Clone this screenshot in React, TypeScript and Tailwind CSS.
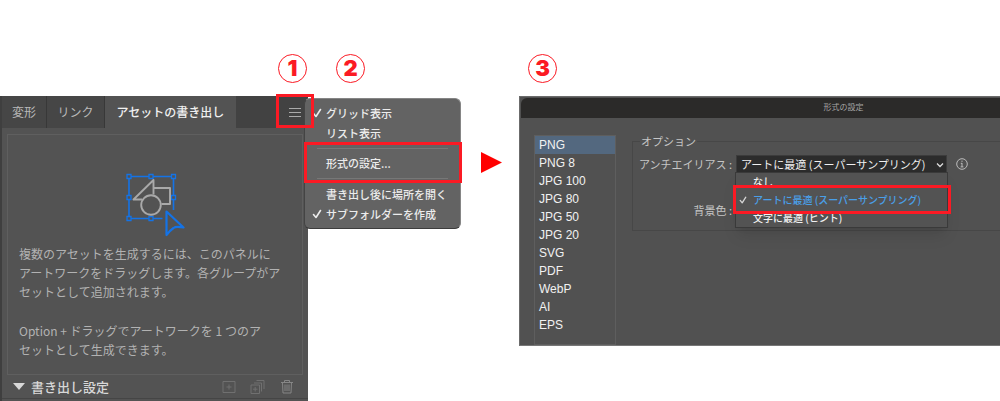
import React, { useState } from 'react';
import { clsx } from 'clsx';

const FORMATS = ['PNG', 'PNG 8', 'JPG 100', 'JPG 80', 'JPG 50', 'JPG 20', 'SVG', 'PDF', 'WebP', 'AI', 'EPS'];

const ANTIALIAS = ['なし', 'アートに最適 (スーパーサンプリング)', '文字に最適 (ヒント)'];

const Step = ({ n, className }: { n: number; className?: string }) => (
  <span
    className={clsx(
      "flex h-[29px] w-[29px] shrink-0 items-center justify-center rounded-full border border-[#fb1a24] font-['Inter','Lato',sans-serif] text-[22px] leading-6 font-black text-[#fb1a24]",
      className
    )}
  >
    {n}
  </span>
);

const Highlight = ({ className }: { className: string }) => (
  <span className={clsx('pointer-events-none absolute z-20 border-[#fb1a24]', className)} />
);

const CheckMark = ({ className = 'h-[10px] w-[10px]' }: { className?: string }) => (
  <svg viewBox="0 0 10 10" className={className} fill="none" stroke="currentColor" strokeWidth="1.6" strokeLinecap="round" strokeLinejoin="round">
    <path d="M1.5 5.5 L4 8.5 L8.5 1.5" />
  </svg>
);

const ArtworkIcon = () => (
  <svg width="60" height="66" viewBox="0 0 60 66" fill="none" className="shrink-0">
    <g stroke="#1473e6" strokeWidth="1.6">
      <path d="M6 4.5 H24 M28 4.5 H46 M48.5 7 V23 M48.5 28 V38 M4 7 V23 M4 28 V44 M6 46.5 H24 M28 46.5 H37.5" />
      <path strokeWidth="1.3" d="M2 2.5h4v4h-4z M24 2.5h4v4h-4z M46.5 2.5h4v4h-4z M2 23.5h4v4h-4z M46.5 23.5h4v4h-4z M2 44.5h4v4h-4z M24 44.5h4v4h-4z" />
      <path strokeWidth="2.2" strokeLinejoin="round" d="M41.5 39.5 L58.5 55.5 Q51 54 48.5 56 Q45.5 58 41.5 63 Z" />
    </g>
    <g stroke="#a9a9a9" strokeWidth="1.9" strokeLinejoin="round">
      <path d="M28.5 22.5 V8 L8.5 27.5 H17" />
      <path d="M29 16 H45 V32 H36.5" />
      <circle cx="26" cy="33" r="9.8" />
    </g>
  </svg>
);

const NewIcon = () => (
  <svg width="14" height="14" viewBox="0 0 14 14" fill="none" stroke="currentColor">
    <path d="M1 1.5h12v11H1z M7 4.5v5 M4.5 7h5" />
  </svg>
);

const StackIcon = () => (
  <svg width="16" height="16" viewBox="0 0 16 16" fill="none" stroke="currentColor">
    <path d="M1 6h8.5v8.5H1z M5.2 8v4.5 M3 10.2h4.5 M4 4h7.5v8.5 M6.5 1.5h7.5v8.5" />
  </svg>
);

const TrashIcon = () => (
  <svg width="14" height="16" viewBox="0 0 14 16" fill="none" stroke="currentColor">
    <path d="M1 3.5h12 M4.5 3.5v-2h5v2 M2.5 3.5l.5 10.5h8l.5-10.5 M5 5.5v6.5 M7 5.5v6.5 M9 5.5v6.5" />
  </svg>
);

const MenuItem = ({ label, checked }: { label: string; checked?: boolean }) => (
  <button type="button" role="menuitem" className="flex h-5 w-full items-center pl-[7px] text-left text-[11px] leading-5 font-medium whitespace-nowrap text-[#ececec]">
    <span className="w-[14px]">{checked && <CheckMark />}</span>
    {label}
  </button>
);

const FlyoutMenu = () => (
  <div role="menu" className="absolute top-[2px] left-[304px] z-10 w-[157px] rounded-md border border-[#858585] border-l-[#444] border-b-[#3c3c3c] bg-[#636363] py-1">
    <MenuItem label="グリッド表示" checked />
    <MenuItem label="リスト表示" />
    <div className="mx-3 mt-[5px] mb-1 h-px bg-[#777]" />
    <MenuItem label="形式の設定..." />
    <div className="mx-3 my-[5px] h-px bg-[#777]" />
    <MenuItem label="書き出し後に場所を開く" />
    <MenuItem label="サブフォルダーを作成" checked />
    <Highlight className="top-[43px] -left-px h-[41px] w-[158px] border-[3px]" />
  </div>
);

const AssetPanel = () => (
  <section className="relative flex w-[308px] shrink-0 flex-col border-l-2 border-[#3f3f3f] bg-[#535353] pb-[2px]">
    <div role="tablist" className="flex h-8 bg-[#424242] text-xs text-[#b9b9b9]">
      <button type="button" role="tab" className="w-[45px] border-r border-[#383838] bg-[#464646]">変形</button>
      <button type="button" role="tab" className="w-[58px] border-r border-[#383838] bg-[#464646]">リンク</button>
      <button type="button" role="tab" aria-selected="true" className="w-[131px] bg-[#535353] font-medium text-[#f0f0f0]">アセットの書き出し</button>
      <button type="button" aria-label="パネルメニュー" className="ml-auto flex w-[19px] flex-col justify-center gap-[3px]">
        <span className="h-px w-3 bg-[#aaa]" />
        <span className="h-px w-3 bg-[#aaa]" />
        <span className="h-px w-3 bg-[#aaa]" />
      </button>
    </div>
    <div className="mx-[5px] mt-[6px] flex flex-col items-center border border-[#5f5f5f] pt-[37px] pb-[15px]">
      <ArtworkIcon />
      <div className="mt-[6px] self-stretch pl-[11px] text-xs leading-[19px] whitespace-nowrap text-[#b2b2b2]">
        <p>複数のアセットを生成するには、このパネルに<br />アートワークをドラッグします。各グループがア<br />セットとして追加されます。</p>
        <p className="mt-5">Option + ドラッグでアートワークを 1 つのア<br />セットとして生成できます。</p>
      </div>
    </div>
    <div className="flex h-6 items-center border-b border-[#454545] pr-[14px] pl-[11px] text-[#707070]">
      <button type="button" className="flex items-center gap-[6px] text-[13px] leading-5 font-medium text-[#d8d8d8]">
        <svg width="12" height="7" viewBox="0 0 12 7" fill="currentColor"><path d="M0 0h12L6 7z" /></svg>
        書き出し設定
      </button>
      <div className="ml-auto flex items-center gap-[14px]">
        <button type="button" aria-label="新規アセット"><NewIcon /></button>
        <button type="button" aria-label="複数アセット"><StackIcon /></button>
        <button type="button" aria-label="削除" className="text-[#868686]"><TrashIcon /></button>
      </div>
    </div>
    <Highlight className="-top-[2px] left-[274px] h-[34px] w-[38px] border-[3px]" />
  </section>
);

const FormatDialog = () => {
  const [format, setFormat] = useState('PNG');
  const [mode, setMode] = useState(ANTIALIAS[1]);

  return (
    <section className="min-w-0 flex-1 overflow-hidden border-t border-l border-[#6b6b6b] border-b border-b-[#777] bg-[#515151]">
      <h2 className="mt-px ml-px h-5 rounded-tl-md bg-[#2b2a29] pl-[166px] text-center text-[8px] leading-[18px] text-[#a5a5a5]">形式の設定</h2>
      <div className="flex items-stretch">
        <ul className="mt-[17px] ml-[14px] w-[82px] shrink-0 border border-[#5e5e5e] pb-[10px]">
          {FORMATS.map((f) => (
            <li key={f}>
              <button
                type="button"
                onClick={() => setFormat(f)}
                className={clsx(
                  'block h-[18px] w-full pl-1 text-left font-["Liberation_Sans",sans-serif] text-xs leading-[18px] text-[#f2f2f2]',
                  format === f && 'bg-[#53687f]'
                )}
              >
                {f}
              </button>
            </li>
          ))}
        </ul>
        <fieldset className="mt-[15px] ml-4 h-[98px] min-w-0 flex-1 border border-r-0 border-[#474747] text-[11px] text-[#c6c6c6]">
          <legend className="ml-[7px] px-px leading-4">オプション</legend>
          <div className="mt-[6px] flex h-[18px] items-center whitespace-nowrap">
            <label htmlFor="antialias" className="w-[103px] pr-1 text-right">アンチエイリアス :</label>
            <div className="relative">
              <select
                id="antialias"
                value={mode}
                onChange={(e) => setMode(e.target.value)}
                className="block h-[18px] w-[211px] appearance-none border border-[#3c3c3c] bg-[#2c2c2c] pl-1 text-[11px] leading-4 text-[#f0f0f0]"
              >
                {ANTIALIAS.map((a) => <option key={a}>{a}</option>)}
              </select>
              <svg viewBox="0 0 8 6" className="pointer-events-none absolute top-[7px] right-[3px] h-[6px] w-2" fill="none" stroke="#ddd" strokeWidth="1.3">
                <path d="M1 1.5l3 3 3-3" />
              </svg>
              <ul role="listbox" className="absolute top-[17px] -left-px z-10 w-[213px] border border-[#3a3a3a] bg-[#535353] text-[10px] font-medium text-[#f0f0f0] shadow-lg">
                {ANTIALIAS.map((a) => (
                  <li key={a} role="option" aria-selected={a === mode}>
                    <button
                      type="button"
                      onClick={() => setMode(a)}
                      className={clsx('flex h-[18px] w-full items-center pl-[3px] leading-[18px]', a === mode && 'text-[#4a9fe8]')}
                    >
                      <span className="w-[14px] text-[#d5d5d5]">{a === mode && <CheckMark className="h-2 w-2" />}</span>
                      {a}
                    </button>
                  </li>
                ))}
                <Highlight className="top-[12px] -left-[3px] h-[29px] w-[218px] border-[3px]" />
              </ul>
            </div>
            <svg width="12" height="12" viewBox="0 0 12 12" className="ml-[9px] shrink-0" fill="none" stroke="#bbb">
              <circle cx="6" cy="6" r="5.3" />
              <path d="M6 5v4 M4.8 5.3h1.2 M4.6 8.9h2.8 M6 2.6v1.3" />
            </svg>
          </div>
          <p className="mt-[28px] w-[103px] pr-1 text-right leading-[18px]">背景色 :</p>
        </fieldset>
      </div>
    </section>
  );
};

export default function App() {
  return (
    <main className="overflow-hidden bg-white font-['Noto_Sans_CJK_JP',sans-serif]">
      <header className="flex h-24 items-center pt-[53px] pb-[13px]">
        <Step n={1} className="ml-[278px]" />
        <Step n={2} className="ml-[29px]" />
        <Step n={3} className="ml-[163px]" />
      </header>
      <div className="relative flex items-start">
        <AssetPanel />
        <FlyoutMenu />
        <svg width="21" height="21" viewBox="0 0 21 21" className="mt-14 mr-[17px] ml-[173px] shrink-0" fill="#ff0000">
          <path d="M0 0L21 10.5L0 21z" />
        </svg>
        <FormatDialog />
      </div>
    </main>
  );
}
